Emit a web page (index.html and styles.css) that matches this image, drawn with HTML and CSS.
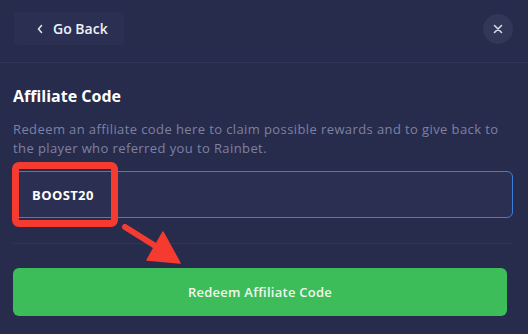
FILE: index.html
```html
<!DOCTYPE html>
<html>
<head>
<meta charset="utf-8">
<link rel="stylesheet" href="styles.css">
</head>
<body>
<div class="modal">
  <header class="top">
    <button class="back">
      <svg width="8" height="10" viewBox="0 0 8 10"><path d="M5.5 1.5 L2.5 5 L5.5 8.5" fill="none" stroke="#e4e6f2" stroke-width="1.5" stroke-linecap="round" stroke-linejoin="round"/></svg>
      <span>Go Back</span>
    </button>
    <button class="close">
      <svg width="10" height="10" viewBox="0 0 10 10"><path d="M1.5 1.5 L8.5 8.5 M8.5 1.5 L1.5 8.5" stroke="#d4d7ea" stroke-width="1.6" stroke-linecap="round"/></svg>
    </button>
  </header>
  <main class="content">
    <h2 class="title">Affiliate Code</h2>
    <p class="desc">Redeem an affiliate code here to claim possible rewards and to give back to the player who referred you to Rainbet.</p>
    <div class="field">
      <div class="input">BOOST20</div>
      <div class="mark"></div>
    </div>
    <div class="divider"></div>
    <button class="redeem">Redeem Affiliate Code</button>
    <svg class="arrow" width="70" height="45" viewBox="0 0 70 45">
      <path d="M4 3 L36 23" stroke="#f53b30" stroke-width="6" stroke-linecap="round"/>
      <path d="M26 36 L42 8 L59 39 Z" fill="#f53b30" stroke="#f53b30" stroke-width="1.5" stroke-linejoin="round"/>
    </svg>
  </main>
</div>
</body>
</html>
```
FILE: styles.css
```css
* { box-sizing: border-box; }
html, body { margin: 0; padding: 0; }
body {
  background: #272c4d;
  font-family: "Open Sans", "Liberation Sans", sans-serif;
  width: 528px;
  height: 334px;
  overflow: hidden;
}
.modal { position: relative; }
.top {
  height: 63px;
  display: flex;
  align-items: flex-start;
  justify-content: space-between;
  padding: 12px 15px 0 14px;
  border-bottom: 1px solid #30355a;
}
.back {
  width: 110px;
  height: 33px;
  background: #2b3053;
  border: none;
  border-radius: 3px;
  display: flex;
  align-items: center;
  gap: 9px;
  padding: 0 0 0 22px;
  color: #eef0fa;
  font-family: inherit;
  font-weight: 600;
  font-size: 14px;
}
.back svg { margin-top: 1px; }
.close {
  width: 30px;
  height: 30px;
  margin-top: 2px;
  border: none;
  border-radius: 50%;
  background: #323758;
  display: flex;
  align-items: center;
  justify-content: center;
  padding: 0;
}
.content {
  position: relative;
  padding: 23px 15px 0 13px;
}
.title {
  margin: 0;
  color: #ffffff;
  font-size: 16px;
  font-weight: 700;
  line-height: 20px;
}
.desc {
  margin: 14px 0 0;
  color: #7d81a2;
  font-size: 13px;
  line-height: 19px;
  letter-spacing: 0.4px;
}
.field {
  position: relative;
  margin-top: 13px;
}
.input {
  height: 47px;
  margin-left: 1px;
  border: 1px solid #3d7fd8;
  border-radius: 6px;
  background: #2b3053;
  color: #ffffff;
  font-size: 13px;
  font-weight: 700;
  letter-spacing: 0.4px;
  display: flex;
  align-items: center;
  padding-left: 17px;
}
.mark {
  position: absolute;
  left: -1px;
  top: -9px;
  width: 106px;
  height: 65px;
  border: 7px solid #f53b30;
  border-radius: 7px;
}
.divider {
  height: 1px;
  background: #30355a;
  margin-top: 25px;
}
.redeem {
  display: block;
  width: 494px;
  height: 48px;
  margin-top: 24px;
  border: none;
  border-radius: 6px;
  background: #3dbd5a;
  color: #eef7ee;
  font-family: inherit;
  font-size: 13px;
  font-weight: 600;
  letter-spacing: 0.25px;
}
.arrow {
  position: absolute;
  left: 121px;
  top: 161px;
}
```
